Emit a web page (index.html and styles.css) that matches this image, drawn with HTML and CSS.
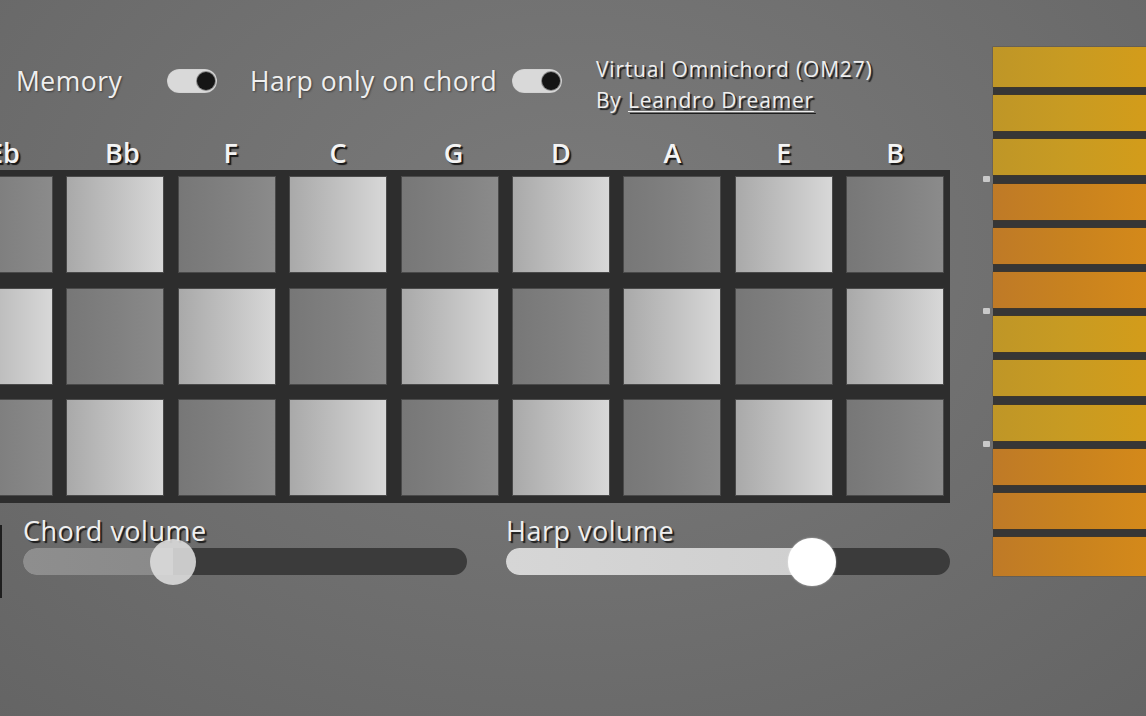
FILE: index.html
```html
<!DOCTYPE html>
<html lang="en">
<head>
<meta charset="utf-8">
<title>Virtual Omnichord (OM27)</title>
<link rel="stylesheet" href="styles.css">
</head>
<body>
<div class="app">
  <div class="main">
    <div class="topbar">
      <span class="opt-label memory">Memory</span>
      <span class="toggle"><span class="knob"></span></span>
      <span class="opt-label harponly">Harp only on chord</span>
      <span class="toggle"><span class="knob"></span></span>
      <div class="title">
        <div>Virtual Omnichord (OM27)</div>
        <div>By <a class="author" href="#">Leandro Dreamer</a></div>
      </div>
    </div>

    <div class="chords">
      <div class="labels">
        <span>Eb</span><span>Bb</span><span>F</span><span>C</span><span>G</span><span>D</span><span>A</span><span>E</span><span>B</span>
      </div>
      <div class="board">
        <div class="cell dark"></div><div class="cell light"></div><div class="cell dark"></div><div class="cell light"></div><div class="cell dark"></div><div class="cell light"></div><div class="cell dark"></div><div class="cell light"></div><div class="cell dark"></div>
        <div class="cell light"></div><div class="cell dark"></div><div class="cell light"></div><div class="cell dark"></div><div class="cell light"></div><div class="cell dark"></div><div class="cell light"></div><div class="cell dark"></div><div class="cell light"></div>
        <div class="cell dark"></div><div class="cell light"></div><div class="cell dark"></div><div class="cell light"></div><div class="cell dark"></div><div class="cell light"></div><div class="cell dark"></div><div class="cell light"></div><div class="cell dark"></div>
      </div>
    </div>

    <div class="sliders">
      <div class="edge"></div>
      <div class="slider chord">
        <div class="slider-label">Chord volume</div>
        <div class="track"><div class="fill" style="width: 150px"></div><div class="thumb" style="left: 150px"></div></div>
      </div>
      <div class="slider harp">
        <div class="slider-label">Harp volume</div>
        <div class="track"><div class="fill" style="width: 306px"></div><div class="thumb" style="left: 306px"></div></div>
      </div>
    </div>
  </div>

  <div class="strings">
    <span class="marker m1"></span>
    <span class="marker m2"></span>
    <span class="marker m3"></span>
    <div class="string yellow first"></div>
    <div class="string yellow"></div>
    <div class="string yellow"></div>
    <div class="string orange"></div>
    <div class="string orange"></div>
    <div class="string orange"></div>
    <div class="string yellow"></div>
    <div class="string yellow"></div>
    <div class="string yellow"></div>
    <div class="string orange"></div>
    <div class="string orange"></div>
    <div class="string orange last"></div>
  </div>
</div>
</body>
</html>
```

FILE: styles.css
```css
html, body {
  margin: 0;
  padding: 0;
}

body {
  width: 1146px;
  height: 716px;
  overflow: hidden;
  font-family: "Open Sans", "Noto Sans", sans-serif;
  color: #efefef;
  background: radial-gradient(ellipse 75% 90% at 50% 35%, #7b7b7b 0%, #717171 45%, #646464 100%);
}

.app {
  display: flex;
  align-items: flex-start;
  height: 716px;
}

.main {
  width: 950px;
  flex: none;
}

/* ---------- top bar ---------- */
.topbar {
  display: flex;
  align-items: flex-start;
  height: 66px;
  margin-top: 54px;
  padding-left: 16px;
}

.opt-label {
  font-size: 26.5px;
  font-weight: 500;
  line-height: 36px;
  margin-top: 9px;
  letter-spacing: 0.5px;
  text-shadow: 1px 1px 2px rgba(0, 0, 0, 0.45);
  white-space: nowrap;
}

.memory {
  width: 151px;
}

.harponly {
  width: 262px;
}

.toggle {
  flex: none;
  position: relative;
  width: 50px;
  height: 24px;
  margin-top: 15px;
  border-radius: 12px;
  background: #d9d9d9;
  box-shadow: inset 0 0 1px rgba(0, 0, 0, 0.3);
}

.toggle .knob {
  position: absolute;
  right: 2px;
  top: 3px;
  width: 18px;
  height: 18px;
  border-radius: 50%;
  background: #151515;
  box-shadow: 0 0 0 1px #8a8a8a;
}

.toggle + .opt-label {
  margin-left: 33px;
}

.title {
  margin-left: 34px;
  font-size: 21px;
  font-weight: 500;
  line-height: 31px;
  letter-spacing: 0.8px;
  text-shadow: 2px 2px 1px rgba(0, 0, 0, 0.75);
  white-space: nowrap;
}

.author {
  color: inherit;
  text-decoration: underline;
  text-underline-offset: 3px;
  text-decoration-thickness: 1px;
}

/* ---------- chord board ---------- */
.chords {
  margin-top: 16px;
  margin-left: -51px;
}

.labels {
  display: grid;
  grid-template-columns: repeat(9, 98px);
  column-gap: 13.4px;
  padding: 0 6px;
  height: 34px;
}

.labels span {
  text-align: center;
  font-size: 27px;
  font-weight: 600;
  line-height: 34px;
  color: #f4f4f4;
  text-shadow: 2px 2px 1px rgba(0, 0, 0, 0.8);
}

.labels span:nth-child(2) {
  padding-left: 14px;
}

.labels span:nth-child(3),
.labels span:nth-child(5) {
  padding-left: 8px;
}

.board {
  display: grid;
  grid-template-columns: repeat(9, 98px);
  grid-auto-rows: 97px;
  column-gap: 13.4px;
  row-gap: 14.5px;
  padding: 6px 6px 7px 6px;
  background: #2d2d2d;
}

.cell {
  box-sizing: border-box;
  border: 1px solid #4a4a4a;
}

.cell.light {
  background: linear-gradient(to right, #a9a9a9 0%, #c0c0c0 50%, #d8d8d8 100%);
}

.cell.dark {
  background: linear-gradient(to right, #777777 0%, #808080 50%, #8b8b8b 100%);
}

/* ---------- sliders ---------- */
.sliders {
  display: flex;
  align-items: flex-start;
  margin-top: 13px;
}

.edge {
  flex: none;
  width: 2px;
  height: 73px;
  margin-top: 9px;
  margin-right: 21px;
  background: #1e1e1e;
}

.slider {
  width: 444px;
  flex: none;
}

.slider.harp {
  margin-left: 39px;
}

.slider-label {
  font-size: 27px;
  font-weight: 500;
  line-height: 30px;
  letter-spacing: 0.5px;
  text-shadow: 2px 2px 1px rgba(0, 0, 0, 0.75);
  white-space: nowrap;
}

.track {
  position: relative;
  height: 27px;
  margin-top: 2px;
  border-radius: 14px;
  background: #3b3b3b;
}

.fill {
  height: 100%;
  border-radius: 14px 0 0 14px;
}

.chord .fill {
  background: linear-gradient(to right, #8e8e8e, #8a8a8a);
}

.harp .fill {
  background: linear-gradient(to right, #d6d6d6, #cfcfcf);
}

.thumb {
  position: absolute;
  top: 50%;
  width: 48px;
  height: 48px;
  margin-left: -24px;
  margin-top: -24px;
  border-radius: 50%;
}

.chord .thumb {
  width: 46px;
  height: 46px;
  margin-left: -23px;
  margin-top: -23px;
  background: rgba(222, 222, 222, 0.88);
}

.harp .thumb {
  background: #ffffff;
  box-shadow: 0 0 2px rgba(255, 255, 255, 0.6);
}

/* ---------- harp strings ---------- */
.strings {
  position: relative;
  flex: 1;
  margin-left: 43px;
  margin-top: 47px;
  display: flex;
  flex-direction: column;
  gap: 8.2px;
}

.string {
  height: 36px;
  flex: none;
  box-shadow: 0 0 0 0.5px rgba(90, 60, 20, 0.5);
}

.string.first {
  height: 40px;
}

.string.last {
  height: 39px;
}

.string.yellow {
  background: linear-gradient(to right, #bf9627 0%, #c89b22 50%, #d39c1a 100%);
}

.string.orange {
  background: linear-gradient(to right, #bf7a27 0%, #c8821f 50%, #d4891a 100%);
}

/* dark bars between strings */
.strings::before {
  content: "";
  position: absolute;
  inset: 0;
  background: #363636;
  z-index: -1;
}

.marker {
  position: absolute;
  left: -10px;
  width: 7px;
  height: 6px;
  background: #c9c9c9;
  border-radius: 1px;
}

.m1 { top: 129px; }
.m2 { top: 261px; }
.m3 { top: 394px; }
```
